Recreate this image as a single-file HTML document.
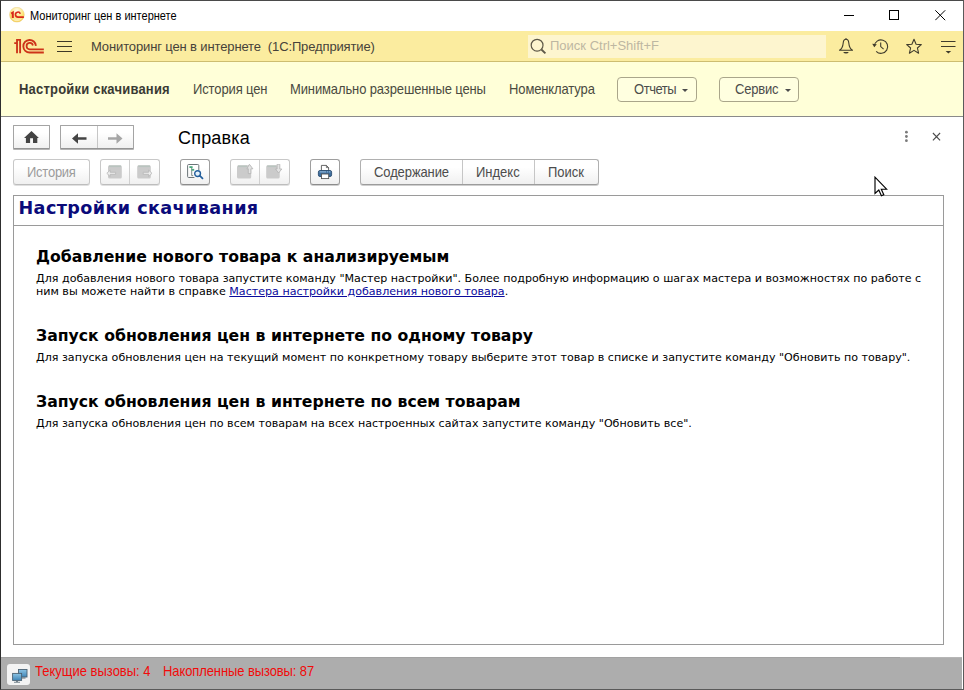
<!DOCTYPE html>
<html lang="ru">
<head>
<meta charset="utf-8">
<title>Мониторинг цен в интернете</title>
<style>
*{box-sizing:border-box;margin:0;padding:0}
html,body{width:964px;height:690px;overflow:hidden;background:#fff}
body{font-family:"Liberation Sans",Arial,sans-serif;color:#333;position:relative}
.abs{position:absolute}
.t{position:absolute;font-size:13px;line-height:16px;white-space:nowrap;transform:scaleY(1.085);transform-origin:0 3px}
#frame{position:absolute;left:0;top:0;width:964px;height:690px;border:1px solid #5a5a5a;border-top-color:#4a4a4a;border-left-color:#2e2e2e;pointer-events:none;z-index:50}
#titlebar{position:absolute;left:1px;top:1px;width:962px;height:30px;background:#fff}
#titlebar .ttl{position:absolute;left:29px;top:6px;font-size:11px;line-height:16px;color:#000;white-space:nowrap;transform:scaleY(1.12);transform-origin:0 4px}
#hdr{position:absolute;left:1px;top:31px;width:962px;height:31px;background:#fbec9f;border-bottom:1px solid #cdbd70}
#hdr .app{position:absolute;left:90px;top:8px;font-size:13px;line-height:16px;color:#46423a;white-space:nowrap;letter-spacing:-.13px}
#search{position:absolute;left:527px;top:4px;width:298px;height:23px;background:#fdf5cf}
#search span{position:absolute;left:22px;top:3px;font-size:13px;line-height:16px;color:#bdb7a2;white-space:nowrap}
#sect{position:absolute;left:1px;top:62px;width:962px;height:55px;background:#ffffd8;border-bottom:1px solid #8a8a8a}
#sect .it{top:19px;color:#4a4a40}
#sect .it.b{font-weight:bold;color:#3a3a34}
.ybtn{position:absolute;top:15px;height:25px;border:1px solid #aaa68a;border-radius:4px;background:#ffffe0;font-size:13px;line-height:23px;color:#4c4c4c;white-space:nowrap}
.ybtn span{top:3px}
.ybtn i{position:absolute;top:11px;width:0;height:0;border-left:3px solid transparent;border-right:3px solid transparent;border-top:3px solid #4c4c4c}
.btn{position:absolute;height:26px;border:1px solid #b0b0b0;border-bottom-color:#9c9c9c;border-radius:3px;background:linear-gradient(#ffffff 30%,#f0f0f0);box-shadow:0 1px 0 #cfcfcf;font-size:13px;line-height:23px;color:#4c4c4c;text-align:center;white-space:nowrap}
.btn.r1{height:24px;border-radius:1px;border-color:#a4a4a4;border-bottom-color:#949494;box-shadow:0 1px 0 #b4b4b4}
.btn.dis{color:#9c9c9c;border-color:#c8c8c8;border-bottom-color:#bdbdbd;box-shadow:0 1px 0 #e0e0e0}
.btn .sep{position:absolute;top:0;bottom:0;width:1px;background:#c6c6c6}
#formtitle{position:absolute;left:178px;top:127px;font-size:18px;line-height:22px;color:#000;white-space:nowrap;letter-spacing:.2px}
#doc{position:absolute;left:13px;top:195px;width:931px;height:450px;border:1px solid #9a9a9a;background:#fff;font-family:"DejaVu Sans","Liberation Sans",sans-serif;color:#000}
#doc h1{position:absolute;left:4.500px;top:1px;font-size:17.6px;line-height:22px;color:#0a0a7a;font-weight:bold;white-space:nowrap;word-spacing:0;letter-spacing:.4px}
#doc .hr{position:absolute;left:0;right:0;top:29px;height:1px;background:#9a9a9a}
#doc h2{position:absolute;left:22px;font-size:15.7px;line-height:18px;font-weight:bold;color:#000;white-space:nowrap}
#doc p{position:absolute;left:22px;font-size:11.1px;line-height:13px;color:#000;white-space:nowrap}
#doc a{color:#0a0a9c;text-decoration:underline}
#status{position:absolute;left:1px;top:657px;width:961px;height:32px;background:#adadad;border-top:1px solid #a2a2a2}
#status span{top:5px;color:#f20a0a}
</style>
</head>
<body>
<div id="titlebar">
  <svg class="abs" style="left:8px;top:6px" width="16" height="16" viewBox="0 0 16 16"><defs><radialGradient id="g1" cx=".5" cy=".25" r=".75"><stop offset="0" stop-color="#fffdf0"/><stop offset=".55" stop-color="#fde680"/><stop offset="1" stop-color="#f6c93a"/></radialGradient><linearGradient id="g3" x1="0" y1="0" x2="0" y2="1"><stop offset=".6" stop-color="#fff" stop-opacity="0"/><stop offset="1" stop-color="#fffbe0" stop-opacity=".75"/></linearGradient></defs><circle cx="7.9" cy="7.7" r="7.4" fill="url(#g1)" stroke="#e8cf8a" stroke-width=".5"/><circle cx="7.9" cy="7.7" r="6.6" fill="url(#g3)"/><g fill="none" stroke="#d9281a"><path d="M2.200 6.600L3.800 5.600V10.900" stroke-width="2"/><path d="M11.300 6.700A2.500 2.500 0 1 0 9 10.100H14.900" stroke-width="1.600"/></g></svg>
  <div class="ttl">Мониторинг цен в интернете</div>
  <svg class="abs" style="left:843px;top:14px" width="12" height="2"><rect width="10" height="1" y="0" fill="#000"/></svg>
  <svg class="abs" style="left:888px;top:9px" width="12" height="12"><rect x=".5" y=".5" width="9" height="9" fill="none" stroke="#000" stroke-width="1"/></svg>
  <svg class="abs" style="left:934px;top:9px" width="12" height="12"><path d="M.3 .3L10.2 10.200M10.200 .3L.3 10.200" stroke="#000" stroke-width="1" fill="none"/></svg>
</div>
<div id="hdr">
  <svg class="abs" style="left:13px;top:7px" width="31" height="16.500" viewBox="0 0 30 16"><g fill="none" stroke="#cd3319"><path d="M.2 5H2.900M2.900 14.800V1.800H5.900V14.800" stroke-width="1.8"/><path d="M21.200 7.600A6.100 6.100 0 1 0 15.200 14.100H28.900" stroke-width="1.8"/><path d="M18.300 7.300A3.100 3.100 0 1 0 15.200 11H28.900" stroke-width="1.7"/></g></svg>
  <svg class="abs" style="left:56px;top:10px" width="15" height="12"><rect x="0" y="0" width="15" height="1" fill="#3e3826"/><rect x="0" y="5" width="15" height="1" fill="#3e3826"/><rect x="0" y="10" width="15" height="1" fill="#3e3826"/></svg>
  <div class="app">Мониторинг цен в интернете&nbsp; (1С:Предприятие)</div>
  <div id="search">
    <svg class="abs" style="left:1px;top:2px" width="18" height="18" viewBox="0 0 18 18"><circle cx="8.100" cy="8.200" r="5.900" fill="none" stroke="#5e5848" stroke-width="1.200"/><path d="M12.400 12.500L16.400 16.400" stroke="#5e5848" stroke-width="1.900"/></svg>
    <span>Поиск Ctrl+Shift+F</span>
  </div>
  <svg class="abs" style="left:836px;top:6px" width="18" height="19" viewBox="0 0 18 19"><path d="M9 2.300C7.300 2.300 6.400 3.900 6.200 6C5.900 9.600 5.300 11.600 2.500 13.300H15.500C12.700 11.600 12.100 9.600 11.800 6C11.600 3.900 10.700 2.300 9 2.300Z" fill="none" stroke="#3f3b2c" stroke-width="1.100" stroke-linejoin="round"/><path d="M6.200 14.900H11.800Q11 16.600 9 16.600Q7 16.600 6.200 14.900Z" fill="#3f3b2c"/><path d="M9 1.200V2.400" stroke="#3f3b2c" stroke-width="1.200"/></svg>
  <svg class="abs" style="left:870px;top:6px" width="19" height="19" viewBox="0 0 19 19"><path d="M3.300 9.300A6.700 6.700 0 1 1 5.200 14.300" fill="none" stroke="#3f3b2c" stroke-width="1.100"/><path d="M1.200 6.800L3.300 10.200L5.800 7.200Z" fill="#3f3b2c"/><path d="M9.700 5.400V9.600L12.600 12.200" fill="none" stroke="#3f3b2c" stroke-width="1.100"/></svg>
  <svg class="abs" style="left:904px;top:6px" width="19" height="19" viewBox="0 0 19 19"><path d="M9 2.200L11.100 7.200L16.300 7.600L12.400 11L13.600 16.200L9 13.400L4.400 16.200L5.600 11L1.700 7.600L6.900 7.200Z" fill="none" stroke="#3f3b2c" stroke-width="1.100" stroke-linejoin="round"/></svg>
  <svg class="abs" style="left:940px;top:9px" width="15" height="14" viewBox="0 0 15 14"><path d="M0 1.500H14.500M0 6.500H14.500" stroke="#3f3b2c" stroke-width="1.100"/><path d="M4.600 11H10.200L7.400 13.600Z" fill="#3f3b2c"/></svg>
</div>
<div id="sect">
  <div class="t it b" style="left:18px;letter-spacing:.2px">Настройки скачивания</div>
  <div class="t it" style="left:192px;letter-spacing:-.12px">История цен</div>
  <div class="t it" style="left:289px;letter-spacing:-.12px">Минимально разрешенные цены</div>
  <div class="t it" style="left:508px;letter-spacing:-.12px">Номенклатура</div>
  <div class="ybtn" style="left:616px;width:80px"><span class="t" style="left:16px;letter-spacing:-.45px">Отчеты</span><i style="left:64px"></i></div>
  <div class="ybtn" style="left:718px;width:80px"><span class="t" style="left:15px;letter-spacing:-.2px">Сервис</span><i style="left:65px"></i></div>
</div>

<div class="btn r1" style="left:13px;top:125px;width:37px">
  <svg class="abs" style="left:10px;top:5px" width="15" height="13" viewBox="0 0 15 13"><path d="M7.500 0L0 6.900H1.900V12.100H6.100V7.300H9V12.100H13.300V6.900H14.900Z" fill="#434343"/></svg>
</div>
<div class="btn r1" style="left:60px;top:125px;width:74px">
  <div class="sep" style="left:36px"></div>
  <svg class="abs" style="left:11px;top:7px" width="15" height="11" viewBox="0 0 15 11"><path d="M0 5.500L6 .3V4.200H14.500V6.800H6V10.700Z" fill="#444"/></svg>
  <svg class="abs" style="left:47px;top:7px" width="15" height="11" viewBox="0 0 15 11"><path d="M14.500 5.500L8.500 .3V4.200H0V6.800H8.500V10.700Z" fill="#a6a6a6"/></svg>
</div>
<div id="formtitle">Справка</div>
<svg class="abs" style="left:904px;top:130px" width="5" height="13"><circle cx="2.400" cy="2.200" r="1.400" fill="#7a7a7a"/><circle cx="2.400" cy="6.500" r="1.400" fill="#7a7a7a"/><circle cx="2.400" cy="10.700" r="1.400" fill="#7a7a7a"/></svg>
<svg class="abs" style="left:932px;top:132px" width="9" height="9"><path d="M.9 1L8.100 8.300M8.100 1L.9 8.300" stroke="#4a4a4a" stroke-width="1.100"/></svg>

<div class="btn dis" style="left:13px;top:159px;width:77px"><span class="t" style="left:13px;top:4px;letter-spacing:-.25px">История</span></div>
<div class="btn dis" style="left:100px;top:159px;width:60px"><div class="sep" style="left:28px;background:#d0d0d0"></div>
  <svg class="abs" style="left:5px;top:5px" width="18" height="15"><rect x="2" y=".3" width="13.800" height="13.300" rx="1.500" fill="#cbcbcb"/><path d="M3 1.300H15" stroke="#b9c4bf" stroke-width="1.600"/><path d="M.8 8.300L4.200 5.100V7.300H9.600V9.300H4.200V11.500Z" fill="#ececec" stroke="#b6b6b6" stroke-width=".8"/></svg>
  <svg class="abs" style="left:34px;top:5px" width="19" height="15"><rect x="2.200" y=".3" width="13.600" height="13.300" rx="1.500" fill="#cbcbcb"/><path d="M3.200 1.300H15" stroke="#b9c4bf" stroke-width="1.600"/><path d="M17 8.300L13.600 5.100V7.300H8.200V9.300H13.600V11.500Z" fill="#ececec" stroke="#b6b6b6" stroke-width=".8"/></svg>
</div>
<div class="btn" style="left:180px;top:159px;width:30px;border-color:#9e9e9e;border-bottom-color:#8c8c8c">
  <svg class="abs" style="left:6px;top:4px" width="18" height="17" viewBox="0 0 18 17"><path d="M.6 1.500Q.6 .5 1.600 .5H10.800Q11.800 .5 11.800 1.500V6.400M.6 1.500V12.500Q.6 13.500 1.600 13.500H7.400" fill="none" stroke="#6c7478" stroke-width="1"/><path d="M4.700 3.500V11.600H6.200" fill="none" stroke="#7c8a88" stroke-width="1"/><rect x="2.400" y="2.200" width="3.200" height="1.800" fill="#4aa87c"/><rect x="4.600" y="4.900" width="2.600" height="1.800" fill="#4aa87c"/><circle cx="10.600" cy="9.600" r="2.900" fill="#e4f0fa" stroke="#245f9c" stroke-width="1.400"/><path d="M12.700 11.700L15.500 14.300" stroke="#245f9c" stroke-width="1.800" stroke-linecap="round"/></svg>
</div>
<div class="btn dis" style="left:230px;top:159px;width:60px"><div class="sep" style="left:28px;background:#d0d0d0"></div>
  <svg class="abs" style="left:5px;top:4px" width="18" height="16"><rect x="1" y="1.300" width="14.200" height="13.300" rx="1.500" fill="#cbcbcb"/><path d="M2 2.300H11" stroke="#b9c4bf" stroke-width="1.600"/><path d="M13.400 .3L16.900 4.800H14.900V9.600H12.300V4.800H10.900Z" fill="#e4e4e4" stroke="#b2b2b2" stroke-width=".8"/></svg>
  <svg class="abs" style="left:34px;top:4px" width="19" height="16"><rect x="1.200" y="1.300" width="13.500" height="13.300" rx="1.500" fill="#cbcbcb"/><path d="M2.200 2.300H11" stroke="#b9c4bf" stroke-width="1.600"/><path d="M12.100 .2H14.800V5H16.800L13.600 9L10.500 5H12.100Z" fill="#e4e4e4" stroke="#b2b2b2" stroke-width=".8"/></svg>
</div>
<div class="btn" style="left:310px;top:159px;width:30px;border-color:#9e9e9e;border-bottom-color:#8c8c8c">
  <svg class="abs" style="left:6px;top:4px" width="17" height="16" viewBox="0 0 17 16"><path d="M4.400 7V1.400H9.400L11.600 3.600V7Z" fill="#fff" stroke="#555" stroke-width=".9"/><path d="M9.400 1.400V3.600H11.600" fill="none" stroke="#555" stroke-width=".8"/><rect x="1.400" y="6.500" width="13.200" height="6" rx="1.600" fill="#3f6f9e" stroke="#2a4d72" stroke-width=".9"/><path d="M2.600 7.900H13.400" stroke="#a9cbe6" stroke-width=".9" stroke-dasharray="6.500 .8 1.200 .8 1.500"/><rect x="4.500" y="10" width="7.200" height="4.600" fill="#fff" stroke="#555" stroke-width=".9"/></svg>
</div>
<div class="btn" style="left:360px;top:159px;width:239px">
  <div class="sep" style="left:101px"></div><div class="sep" style="left:173px"></div>
  <span class="t" style="left:13px;top:4px;letter-spacing:-.1px">Содержание</span>
  <span class="t" style="left:115px;top:4px">Индекс</span>
  <span class="t" style="left:187px;top:4px">Поиск</span>
</div>

<div id="doc">
  <h1>Настройки скачивания</h1>
  <div class="hr"></div>
  <h2 style="top:52px">Добавление нового товара к анализируемым</h2>
  <p style="top:76px">Для добавления нового товара запустите команду "Мастер настройки". Более подробную информацию о шагах мастера и возможностях по работе с<br>ним вы можете найти в справке <a>Мастера настройки добавления нового товара</a>.</p>
  <h2 style="top:131px">Запуск обновления цен в интернете по одному товару</h2>
  <p style="top:155px">Для запуска обновления цен на текущий момент по конкретному товару выберите этот товар в списке и запустите команду "Обновить по товару".</p>
  <h2 style="top:197px">Запуск обновления цен в интернете по всем товарам</h2>
  <p style="top:221px">Для запуска обновления цен по всем товарам на всех настроенных сайтах запустите команду "Обновить все".</p>
</div>

<svg class="abs" style="left:874px;top:176px;z-index:60" width="14" height="21" viewBox="0 0 14 21"><path d="M1 1.200V17.400L4.800 14L7.400 19.800L9.800 18.800L7.300 13.200H12.600Z" fill="#fff" stroke="#000" stroke-width="1.150" stroke-linejoin="miter"/></svg>

<div id="status">
  <div class="abs" style="left:899px;top:-1px;width:62px;height:1px;background:#b6b6b6"></div>
  <div class="abs" style="left:6px;top:6px;width:23px;height:21px;background:#f3f3f3;border-radius:3px"></div>
  <svg class="abs" style="left:11px;top:11px" width="16" height="14" viewBox="0 0 16 14"><defs><linearGradient id="g2" x1="0" y1="0" x2="0" y2="1"><stop offset="0" stop-color="#8cc4e4"/><stop offset="1" stop-color="#3f86b8"/></linearGradient></defs><rect x="6.500" y=".5" width="8.500" height="7.500" fill="url(#g2)" stroke="#4a6274" stroke-width=".9"/><rect x="10" y="8.500" width="3.500" height="1" fill="#5a6a74"/><rect x=".6" y="4.400" width="9" height="7" fill="url(#g2)" stroke="#4a6274" stroke-width=".9"/><rect x="4" y="11.800" width="2" height="1" fill="#5a6a74"/><rect x="2" y="12.800" width="6" height=".9" fill="#6a7a84"/></svg>
  <span class="t" style="left:34px">Текущие вызовы: 4</span>
  <span class="t" style="left:162px;letter-spacing:-.1px">Накопленные вызовы: 87</span>
</div>
<div id="frame"></div>
</body>
</html>
